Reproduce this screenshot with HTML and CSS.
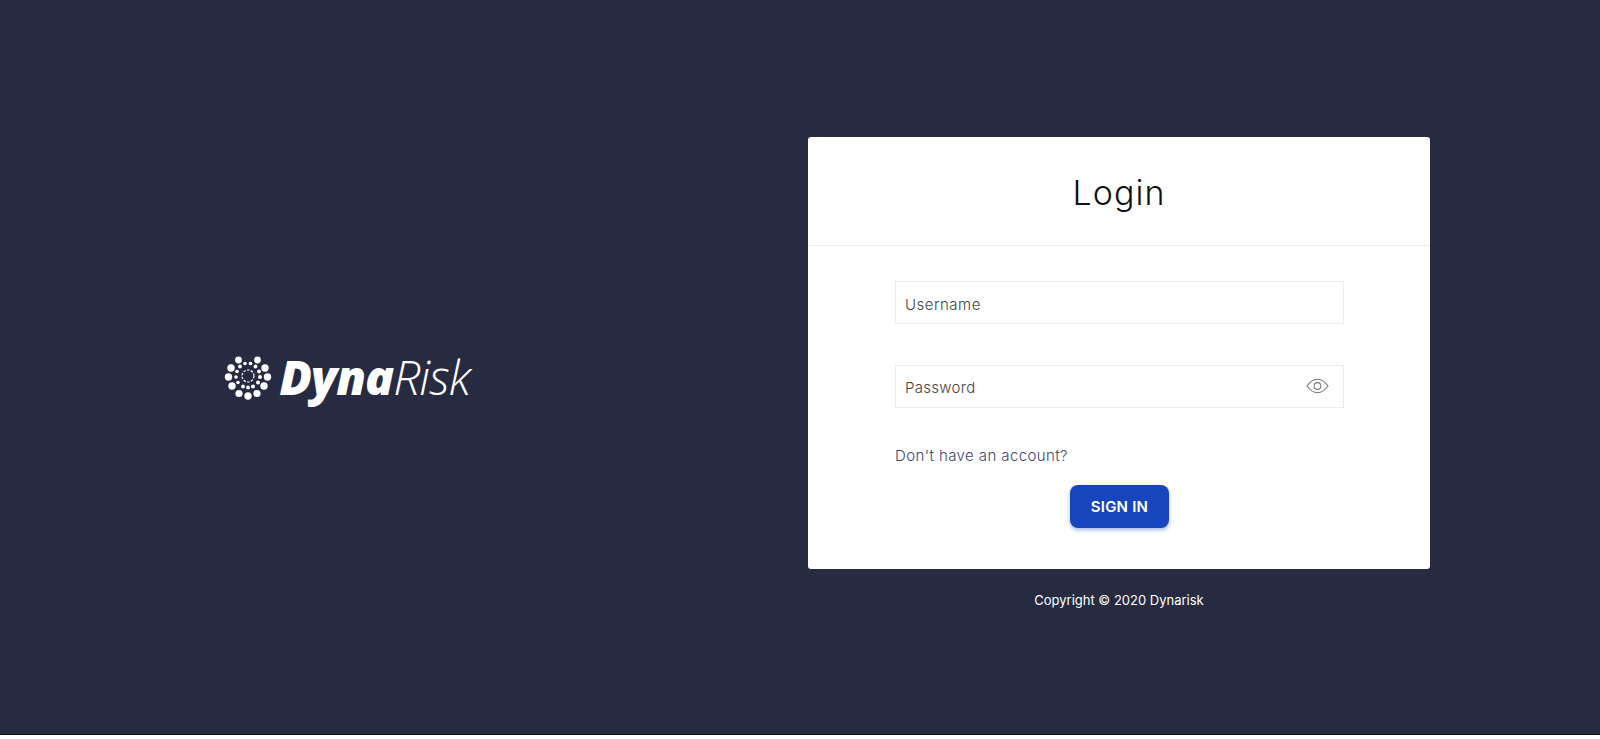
FILE: index.html
```html
<!DOCTYPE html>
<html lang="en">
<head>
  <meta charset="UTF-8">
  <meta name="viewport" content="width=device-width, initial-scale=1.0">
  <title>Login - Dynarisk</title>
  <link rel="stylesheet" href="styles.css">
</head>
<body>
  <div class="page">
    <!-- Brand -->
    <div class="brand">
      <svg class="brand-mark" viewBox="0 0 48 44" fill="#fff">
        <circle cx="14.500" cy="4" r="3.400"/><circle cx="33.500" cy="4" r="3.400"/>
        <circle cx="7" cy="12" r="3.700"/><circle cx="41" cy="12" r="3.700"/>
        <circle cx="4.500" cy="21" r="3.700"/><circle cx="43.500" cy="21" r="3.700"/>
        <circle cx="8" cy="30" r="3.700"/><circle cx="40" cy="30" r="3.700"/>
        <circle cx="15" cy="37.500" r="3.600"/><circle cx="24" cy="40" r="3.700"/><circle cx="33" cy="37.500" r="3.600"/>
        <circle cx="16" cy="10.500" r="1.900"/><circle cx="21" cy="7.500" r="1.800"/><circle cx="26.500" cy="7.500" r="1.800"/><circle cx="31.500" cy="10.500" r="1.900"/>
        <circle cx="13" cy="15.500" r="1.800"/><circle cx="35" cy="15.500" r="1.900"/>
        <circle cx="12" cy="21" r="1.800"/><circle cx="36" cy="21" r="2"/>
        <circle cx="14" cy="26.500" r="1.800"/><circle cx="34" cy="26.500" r="2"/>
        <circle cx="19" cy="30.500" r="1.900"/><circle cx="24" cy="31.500" r="1.900"/><circle cx="29" cy="30.500" r="2"/>
        <circle cx="24" cy="20" r="6" fill="none" stroke="#fff" stroke-width="1.200" stroke-dasharray="2.400 1.400"/>
      </svg>
      <div class="brand-name"><b>Dyna</b>Risk</div>
    </div>

    <!-- Login -->
    <div class="login">
      <div class="card">
        <h1 class="card-title">Login</h1>
        <form class="card-body">
          <div class="field">
            <input type="text" class="username" placeholder="Username">
          </div>
          <div class="field">
            <input type="password" placeholder="Password">
            <svg class="eye-icon" viewBox="0 0 24 16" fill="none" stroke="#777" stroke-width="1.100">
              <path d="M1 8C4.500 3.200 8 1 12 1s7.500 2.200 11 7c-3.500 4.800-7 7-11 7S4.500 12.800 1 8z"/>
              <circle cx="12" cy="8" r="3.500"/>
            </svg>
          </div>
          <a class="signup-link" href="#">Don't have an account?</a>
          <button type="button" class="button">SIGN IN</button>
        </form>
      </div>
      <p class="copyright">Copyright © 2020 Dynarisk</p>
    </div>
  </div>
</body>
</html>
```

FILE: styles.css
```css
:root {
  --navy: #262b42;
  --blue: #1745bb;
  --line: #ececec;
}

html, body {
  margin: 0;
  padding: 0;
  background-color: white;
}

body {
  font-family: 'Inter', 'Noto Sans', sans-serif;
  overflow: hidden;
}

.page {
  background-color: var(--navy);
  height: 735px;
  display: flex;
  border-bottom: 1px solid #111;
  box-sizing: border-box;
}

.brand {
  width: 694px;
  padding-top: 20px;
  box-sizing: border-box;
  display: flex;
  align-items: center;
  justify-content: center;
  gap: 7px;
}

.brand-mark {
  width: 48px;
  height: 44px;
  margin-top: 2px;
}

.brand-name {
  font-family: 'Open Sans', sans-serif;
  font-style: italic;
  font-weight: 300;
  font-size: 48px;
  line-height: 56px;
  letter-spacing: -1px;
  color: white;
}

.brand-name b {
  font-weight: 800;
}

.login {
  width: 622px;
  margin-left: 114px;
  padding-top: 137px;
}

.card {
  background-color: white;
  border-radius: 3px;
  height: 432px;
  box-sizing: border-box;
}

.card-title {
  margin: 0;
  height: 109px;
  line-height: 111px;
  border-bottom: 1px solid var(--line);
  box-sizing: border-box;
  text-align: center;
  font-size: 34px;
  font-weight: 300;
  letter-spacing: 1px;
  color: #111;
}

.card-body {
  padding: 35px 86px 0 87px;
  display: flex;
  flex-direction: column;
}

.field {
  position: relative;
  margin-bottom: 41px;
}

input {
  display: block;
  width: 100%;
  height: 43px;
  padding: 2px 9px 0;
  border: 1px solid var(--line);
  box-sizing: border-box;
  font-family: inherit;
  font-size: 15px;
  font-weight: 300;
  letter-spacing: 0.3px;
  outline: none;
}

input.username {
  padding-top: 4px;
  letter-spacing: 0.5px;
}

input::placeholder {
  color: #444;
  opacity: 1;
}

.eye-icon {
  position: absolute;
  right: 15px;
  top: 13px;
  width: 23px;
  height: 16px;
}

.signup-link {
  margin-top: -3px;
  font-size: 15px;
  font-weight: 300;
  letter-spacing: 0.4px;
  line-height: 20px;
  color: #3f4674;
  text-decoration: none;
}

.button {
  align-self: center;
  margin-top: 19px;
  width: 99px;
  height: 43px;
  background-color: var(--blue);
  color: white;
  border: none;
  border-radius: 8px;
  box-shadow: 0 2px 4px rgba(23, 69, 187, 0.4);
  font-family: inherit;
  font-size: 15px;
  font-weight: 600;
  letter-spacing: 0.2px;
  cursor: pointer;
}

.copyright {
  margin: 22px 0 0;
  text-align: center;
  font-size: 13px;
  line-height: 18px;
  color: white;
}
```
